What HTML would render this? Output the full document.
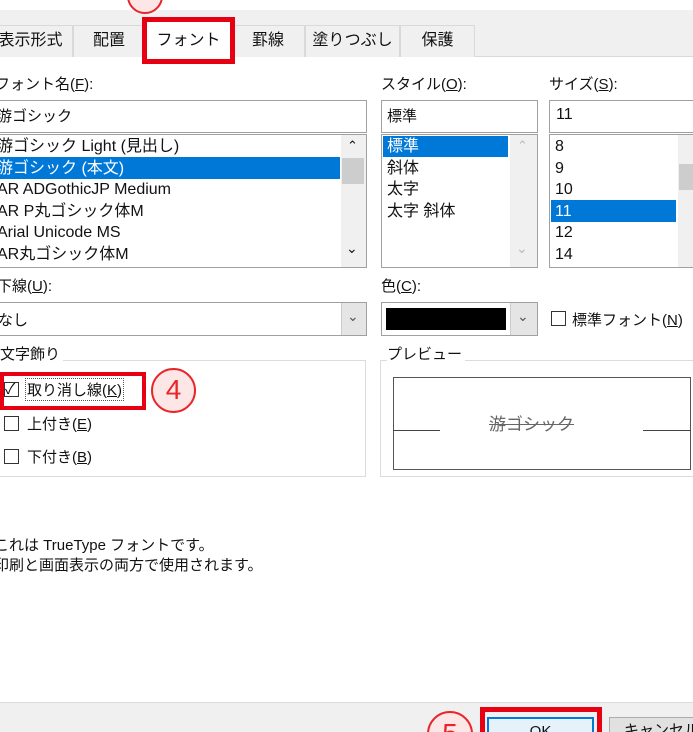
<!DOCTYPE html>
<html><head><meta charset="utf-8"><style>
*{margin:0;padding:0;box-sizing:border-box}
html,body{width:693px;height:732px;overflow:hidden}
body{background:#fff;position:relative;font-family:"Liberation Sans","Noto Sans CJK JP",sans-serif;font-size:15px;color:#111}
.a{position:absolute;white-space:nowrap}
.box{position:absolute;border:1px solid #a0a0a0;background:#fff}
.sel{position:absolute;background:#0078d7}
.w{color:#fff}
.sb{position:absolute;background:#f0f0f0}
.thumb{position:absolute;background:#cdcdcd}
.cb{position:absolute;width:15px;height:15px;border:1px solid #333;background:#fff}
.tab{position:absolute;top:25px;height:32px;border:1px solid #d9d9d9;border-bottom:none;background:#f0f0f0;text-align:center;line-height:30px;font-size:16px}
.circ{position:absolute;border:2px solid #e8262a;border-radius:50%;background:#fde6e6;color:#e8262a;text-align:center}
u{text-decoration:underline}
</style></head><body>
<div class="a" style="left:0;top:10px;width:693px;height:47px;background:#f0f0f0"></div>
<div class="a" style="left:0;top:56px;width:693px;height:1px;background:#d9d9d9"></div>
<div class="circ" style="left:127px;top:-22px;width:36px;height:36px"></div>
<div class="tab" style="left:-12px;width:85px">表示形式</div>
<div class="tab" style="left:73px;width:72px">配置</div>
<div class="tab" style="left:231px;width:74px">罫線</div>
<div class="tab" style="left:305px;width:95px">塗りつぶし</div>
<div class="tab" style="left:400px;width:75px">保護</div>
<div class="a" style="left:145px;top:22px;width:87px;height:38px;background:#fff;text-align:center;line-height:38px;font-size:16px">フォント</div>
<div class="a" style="left:142px;top:17px;width:93px;height:47px;border:5px solid #e60012"></div>

<div class="a" style="left:-5px;top:73px">フォント名(<u>F</u>):</div>
<div class="a" style="left:381px;top:73px">スタイル(<u>O</u>):</div>
<div class="a" style="left:549px;top:73px">サイズ(<u>S</u>):</div>

<div class="box" style="left:-2px;top:100px;width:369px;height:33px"></div>
<div class="a" style="left:-3px;top:105px">游ゴシック</div>
<div class="box" style="left:381px;top:100px;width:157px;height:33px"></div>
<div class="a" style="left:387px;top:105px">標準</div>
<div class="box" style="left:549px;top:100px;width:150px;height:33px"></div>
<div class="a" style="left:556px;top:106px;font-size:16px">11</div>

<div class="box" style="left:-2px;top:134px;width:369px;height:134px"></div>
<div class="sel" style="left:0;top:157px;width:340px;height:22px"></div>
<div class="sb" style="left:341px;top:135px;width:25px;height:132px"></div>
<div class="thumb" style="left:342px;top:158px;width:22px;height:26px"></div>
<div class="a" style="left:347px;top:138px;font-size:13px">&#8963;</div>
<div class="a" style="left:346px;top:240px;font-size:14px">&#8964;</div>
<div class="a" style="left:-3px;top:136px;font-size:16px;line-height:21.6px">游ゴシック Light (見出し)<br><span class="w">游ゴシック (本文)</span><br>AR ADGothicJP Medium<br>AR P丸ゴシック体M<br>Arial Unicode MS<br>AR丸ゴシック体M</div>

<div class="box" style="left:381px;top:134px;width:157px;height:134px"></div>
<div class="sel" style="left:383px;top:136px;width:125px;height:21px"></div>
<div class="sb" style="left:510px;top:135px;width:27px;height:132px"></div>
<div class="a" style="left:517px;top:138px;font-size:13px;color:#bbb">&#8963;</div>
<div class="a" style="left:516px;top:240px;font-size:14px;color:#bbb">&#8964;</div>
<div class="a" style="left:387px;top:136px;font-size:16px;line-height:21.6px"><span class="w">標準</span><br>斜体<br>太字<br>太字 斜体</div>

<div class="box" style="left:549px;top:134px;width:150px;height:134px"></div>
<div class="sel" style="left:551px;top:200px;width:125px;height:22px"></div>
<div class="sb" style="left:678px;top:135px;width:20px;height:132px"></div>
<div class="thumb" style="left:679px;top:164px;width:18px;height:26px"></div>
<div class="a" style="left:555px;top:136px;font-size:16px;line-height:21.6px">8<br>9<br>10<br><span class="w">11</span><br>12<br>14</div>

<div class="a" style="left:-3px;top:275px">下線(<u>U</u>):</div>
<div class="a" style="left:381px;top:275px">色(<u>C</u>):</div>
<div class="box" style="left:-2px;top:302px;width:369px;height:34px"></div>
<div class="sb" style="left:341px;top:303px;width:25px;height:32px;background:#e5e5e5;border-left:1px solid #ccc"></div>
<div class="a" style="left:347px;top:308px;font-size:14px;color:#555">&#8964;</div>
<div class="a" style="left:-2px;top:309px">なし</div>
<div class="box" style="left:381px;top:302px;width:157px;height:34px"></div>
<div class="a" style="left:386px;top:308px;width:120px;height:22px;background:#000"></div>
<div class="sb" style="left:510px;top:303px;width:27px;height:32px;background:#e5e5e5;border-left:1px solid #ccc"></div>
<div class="a" style="left:517px;top:308px;font-size:14px;color:#555">&#8964;</div>
<div class="cb" style="left:551px;top:311px"></div>
<div class="a" style="left:572px;top:309px">標準フォント(<u>N</u>)</div>

<div class="a" style="left:-2px;top:360px;width:368px;height:117px;border:1px solid #dcdcdc"></div>
<div class="a" style="left:0;top:343px;background:#fff;padding-right:3px">文字飾り</div>
<div class="cb" style="left:4px;top:382px"></div>
<div class="a" style="left:5px;top:378px;font-size:15px">&#10003;</div>
<div class="a" style="left:25px;top:378px;border:1px dotted #555;padding:0 1px">取り消し線(<u>K</u>)</div>
<div class="a" style="left:0;top:372px;width:146px;height:38px;border:4px solid #e60012"></div>
<div class="circ" style="left:151px;top:368px;width:45px;height:45px;font-size:28px;line-height:40px">4</div>
<div class="cb" style="left:4px;top:416px"></div>
<div class="a" style="left:27px;top:413px">上付き(<u>E</u>)</div>
<div class="cb" style="left:4px;top:449px"></div>
<div class="a" style="left:27px;top:446px">下付き(<u>B</u>)</div>

<div class="a" style="left:380px;top:360px;width:320px;height:117px;border:1px solid #dcdcdc"></div>
<div class="a" style="left:387px;top:343px;background:#fff;padding-right:3px">プレビュー</div>
<div class="a" style="left:393px;top:377px;width:298px;height:93px;border:1px solid #555"></div>
<div class="a" style="left:393px;top:430px;width:47px;height:1px;background:#444"></div>
<div class="a" style="left:643px;top:430px;width:48px;height:1px;background:#444"></div>
<div class="a" style="left:489px;top:410px;font-size:17px;color:#666;text-decoration:line-through">游ゴシック</div>

<div class="a" style="left:-6px;top:536px;font-size:15px;line-height:20px">これは TrueType フォントです。<br>印刷と画面表示の両方で使用されます。</div>

<div class="a" style="left:0;top:702px;width:693px;height:30px;background:#f0f0f0;border-top:1px solid #dcdcdc"></div>
<div class="circ" style="left:427px;top:711px;width:46px;height:46px;font-size:28px;line-height:42px">5</div>
<div class="a" style="left:487px;top:717px;width:107px;height:30px;background:#e5f1fb;border:2px solid #0078d7;text-align:center;line-height:26px">OK</div>
<div class="a" style="left:480px;top:707px;width:122px;height:40px;border:5px solid #e60012"></div>
<div class="a" style="left:609px;top:717px;width:100px;height:30px;background:#e1e1e1;border:1px solid #adadad;padding-left:14px;line-height:26px">キャンセル</div>
</body></html>
